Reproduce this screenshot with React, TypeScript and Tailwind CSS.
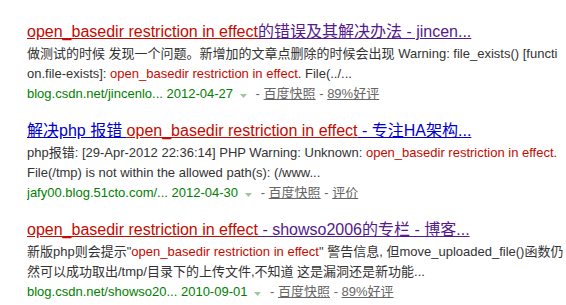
import React from "react";

const RED = "text-[#c60a00]";

function Title({ children }: { children: React.ReactNode }) {
  return (
    <div className="whitespace-nowrap overflow-hidden text-[16px] leading-[22px]">
      {children}
    </div>
  );
}

function Line({ children, className = "" }: { children: React.ReactNode; className?: string }) {
  return (
    <div className={"whitespace-nowrap overflow-hidden text-[13px] leading-[20px] text-[#333333] " + className}>
      {children}
    </div>
  );
}

function Em({ children }: { children: React.ReactNode }) {
  return <span className={RED}>{children}</span>;
}

function Meta({ url, date, links }: { url: string; date: string; links: string[] }) {
  return (
    <Line className="flex items-center">
      <span className="text-[#008000]">
        {url} {date}
      </span>
      <svg width="7" height="4" viewBox="0 0 7 4" className="ml-[7px] mr-[5px] mt-[3px]">
        <polygon points="0,0 7,0 3.5,4" fill="#9fc79f" />
      </svg>
      {links.map((l, i) => (
        <React.Fragment key={i}>
          <span className="text-[#666666]">&nbsp;-&nbsp;</span>
          <span className="text-[#666666] underline">{l}</span>
        </React.Fragment>
      ))}
    </Line>
  );
}

export default function App() {
  return (
    <div
      className="w-[566px] h-[305px] bg-white overflow-hidden pl-[27px] pt-[21px] flex flex-col gap-[16px]"
      style={{ fontFamily: '"Liberation Sans", Arial, "Noto Sans CJK SC", sans-serif' }}
    >
      <div className="flex flex-col">
        <Title>
          <span className="text-[#c60a00] underline">open_basedir restriction in effect</span>
          <span className="text-[#551a8b] underline">的错误及其解决办法 - jincen...</span>
        </Title>
        <div className="mt-[1px]">
          <Line>做测试的时候 发现一个问题。新增加的文章点删除的时候会出现 Warning: file_exists() [functi</Line>
          <Line>
            on.file-exists]: <Em>open_basedir restriction in effect</Em>. File(../...
          </Line>
          <Meta url="blog.csdn.net/jincenlo..." date="2012-04-27" links={["百度快照", "89%好评"]} />
        </div>
      </div>

      <div className="flex flex-col">
        <Title>
          <span className="text-[#0000cc] underline">解决php 报错 </span>
          <span className="text-[#c60a00] underline">open_basedir restriction in effect</span>
          <span className="text-[#0000cc] underline"> - 专注HA架构...</span>
        </Title>
        <div className="mt-[1px]">
          <Line>
            php报错: [29-Apr-2012 22:36:14] PHP Warning: Unknown: <Em>open_basedir restriction in effect.</Em>
          </Line>
          <Line>File(/tmp) is not within the allowed path(s): (/www...</Line>
          <Meta url="jafy00.blog.51cto.com/..." date="2012-04-30" links={["百度快照", "评价"]} />
        </div>
      </div>

      <div className="flex flex-col">
        <Title>
          <span className="text-[#c60a00] underline">open_basedir restriction in effect</span>
          <span className="text-[#551a8b] underline"> - showso2006的专栏 - 博客...</span>
        </Title>
        <div className="mt-[1px]">
          <Line>
            新版php则会提示"<Em>open_basedir restriction in effect</Em>" 警告信息, 但move_uploaded_file()函数仍
          </Line>
          <Line>然可以成功取出/tmp/目录下的上传文件,不知道 这是漏洞还是新功能...</Line>
          <Meta url="blog.csdn.net/showso20..." date="2010-09-01" links={["百度快照", "89%好评"]} />
        </div>
      </div>
    </div>
  );
}
